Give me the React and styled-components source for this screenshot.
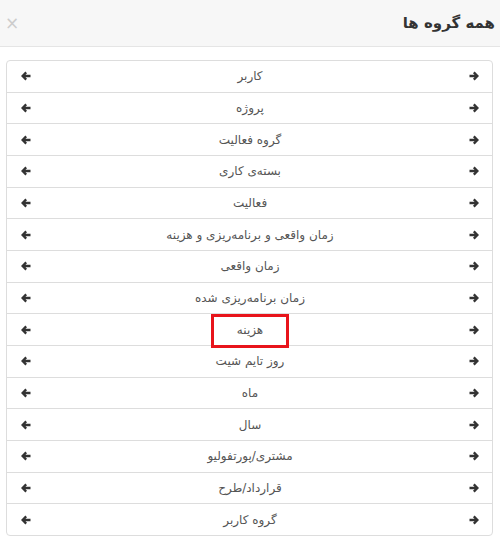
import React from "react";
import styled, { createGlobalStyle } from "styled-components";

const GlobalStyle = createGlobalStyle`
  html, body {
    margin: 0;
    padding: 0;
    background: #fff;
  }
  body {
    font-family: "DejaVu Sans", "Noto Sans", sans-serif;
  }
`;

const Modal = styled.div`
  width: 500px;
  height: 546px;
  direction: rtl;
  background: #fff;
`;

const Header = styled.div`
  height: 47px;
  box-sizing: border-box;
  display: flex;
  align-items: center;
  justify-content: space-between;
  padding: 0 5px 0 5px;
  background: #f7f7f7;
  border-bottom: 1px solid #e5e5e5;
`;

const Title = styled.h4`
  margin: 0;
  font-size: 15px;
  font-weight: bold;
  color: #333;
`;

const Close = styled.span`
  font-size: 17px;
  color: #ccc;
  line-height: 1;
`;

const Body = styled.div`
  padding: 13px 7px 0 6px;
`;

const List = styled.div`
  border: 1px solid #ddd;
  border-radius: 4px;
  overflow: hidden;
`;

const Item = styled.div`
  display: flex;
  align-items: center;
  justify-content: space-between;
  height: 30.67px;
  padding: 0 13px 0 14px;
  font-size: 12px;
  color: #555;
  border-top: ${(p) => (p.$first ? "none" : "1px solid #ddd")};
`;

const Label = styled.span`
  position: relative;
  padding: 0 4px;
  ${(p) =>
    p.$marked &&
    `
    &::after {
      content: "";
      position: absolute;
      top: -9px;
      bottom: -11px;
      left: -22px;
      right: -22px;
      border: 3px solid #e8141b;
    }
  `}
`;

const ArrowSvg = styled.svg`
  width: 10px;
  height: 10px;
  display: block;
  transform: ${(p) => (p.$left ? "scaleX(-1)" : "none")};
`;

function Arrow({ left }) {
  return (
    <ArrowSvg viewBox="0 0 10 10" $left={left}>
      <path
        d="M0.5 5 H8.2 M4.8 1.4 L8.4 5 L4.8 8.6"
        fill="none"
        stroke="#333"
        strokeWidth="2.3"
      />
    </ArrowSvg>
  );
}

const groups = [
  "کاربر",
  "پروژه",
  "گروه فعالیت",
  "بسته‌ی کاری",
  "فعالیت",
  "زمان واقعی و برنامه‌ریزی و هزینه",
  "زمان واقعی",
  "زمان برنامه‌ریزی شده",
  "هزینه",
  "روز تایم شیت",
  "ماه",
  "سال",
  "مشتری/پورتفولیو",
  "قرارداد/طرح",
  "گروه کاربر",
];

export default function App() {
  return (
    <>
      <GlobalStyle />
      <Modal>
        <Header>
          <Title>همه گروه ها</Title>
          <Close>×</Close>
        </Header>
        <Body>
          <List>
            {groups.map((g, i) => (
              <Item key={g} $first={i === 0}>
                <Arrow />
                <Label $marked={g === "هزینه"}>{g}</Label>
                <Arrow left />
              </Item>
            ))}
          </List>
        </Body>
      </Modal>
    </>
  );
}
